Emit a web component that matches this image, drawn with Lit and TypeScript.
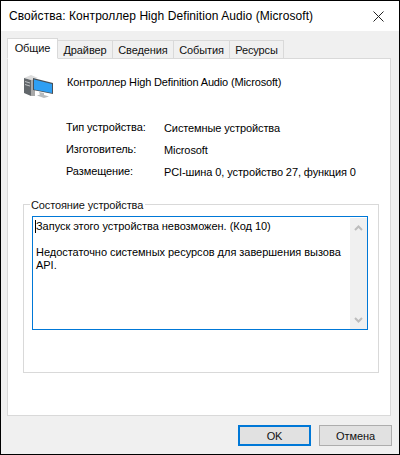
import { LitElement, html, css } from "lit";
import { customElement } from "lit/decorators.js";
import { styleMap } from "lit/directives/style-map.js";

@customElement("app-root")
export class AppRoot extends LitElement {
  static styles = css`
    :host { display: block; width: 400px; height: 455px; font-family: "Liberation Sans", Arial, sans-serif; font-size: 11px; letter-spacing: -0.1px; color: #000; }
    * { box-sizing: border-box; }
    .win { width: 400px; height: 455px; border: 1px solid #000; background: #f0f0f0; display: flex; flex-direction: column; }
    .title { height: 30px; flex: none; background: #fff; display: flex; align-items: center; justify-content: space-between; padding: 0 15px 0 8px; font-size: 12px; letter-spacing: 0.07px; }
    .close { width: 11px; height: 11px; display: block; }
    .body { flex: 1; padding: 7px 8px 0 6px; display: flex; flex-direction: column; min-height: 0; }
    .tabs { display: flex; height: 20px; flex: none; align-items: flex-end; position: relative; z-index: 1; }
    .tab { height: 18px; border: 1px solid #d9d9d9; border-left: none; border-bottom: none; display: flex; align-items: center; justify-content: center; background: #f0f0f0; color: #111; padding-top: 1px; }
    .tab.active { height: 21px; background: #fff; border: 1px solid #d9d9d9; border-bottom: 1px solid #fff; margin-bottom: -1px; padding: 0 0 2px; }
    .panel { flex: none; width: 384px; height: 358px; background: #fff; border: 1px solid #d9d9d9; padding: 0 15px; display: flex; flex-direction: column; }
    .head { display: flex; align-items: flex-start; height: 61px; padding: 16px 0 0 1px; gap: 14px; }
    .head svg { width: 29px; height: 24px; flex: none; }
    .head span { line-height: 14px; letter-spacing: -0.15px; }
    .props { display: grid; grid-template-columns: 98px 1fr; grid-auto-rows: 22px; margin-left: 43px; line-height: 14px; }
    .props .v { padding-top: 1px; }
    .group { position: relative; margin-top: 18px; width: 356px; height: 169px; border: 1px solid #d9d9d9; padding: 11px 8px; }
    .legend { position: absolute; top: -7px; left: 6px; background: #fff; padding: 0 2px 0 1px; line-height: 14px; color: #111; letter-spacing: -0.12px; }
    .box { width: 336px; height: 114px; border: 1px solid #0078d7; display: flex; background: #fff; }
    .text { flex: 1; padding: 3px 0 0 3px; line-height: 13px; position: relative; white-space: pre-line; letter-spacing: -0.03px; }
    .caret { position: absolute; left: 2px; top: 3px; width: 1px; height: 13px; background: #000; }
    .bar { width: 17px; flex: none; background: #f0f0f0; margin: 1px 0 0 0; display: flex; flex-direction: column; justify-content: space-between; align-items: center; padding: 7px 0 6px; }
    .bar svg { width: 9px; height: 6px; display: block; }
    .footer { flex: 1; display: flex; justify-content: flex-end; gap: 8px; padding-top: 9px; margin-right: -1px; }
    .btn { width: 73px; height: 21px; border: 1px solid #adadad; background: #e1e1e1; display: flex; align-items: center; justify-content: center; color: #111; }
    .btn.default { border: 2px solid #0078d7; }
  `;

  render() {
    const tabs = [
      { label: "Драйвер", width: 55 },
      { label: "Сведения", width: 61 },
      { label: "События", width: 56 },
      { label: "Ресурсы", width: 54 },
    ];
    return html`
      <div class="win">
        <div class="title">
          <span>Свойства: Контроллер High Definition Audio (Microsoft)</span>
          <svg class="close" viewBox="0 0 11 11"><path d="M.5 .5 10.500 10.500M10.500 .5 .5 10.500" stroke="#222" stroke-width="1" fill="none"/></svg>
        </div>
        <div class="body">
          <div class="tabs">
            <div class="tab active" style=${styleMap({ width: "51px" })}>Общие</div>
            ${tabs.map((t) => html`<div class="tab" style=${styleMap({ width: `${t.width}px` })}>${t.label}</div>`)}
          </div>
          <div class="panel">
            <div class="head">
              <svg viewBox="0 0 29 24">
                <path d="M0 3 7 0 14 3 7 5Z" fill="#dcdcdc"/>
                <path d="M0 3 7 5V21L0 18Z" fill="#62676b"/>
                <path d="M1 6 6 7.500V8.500L1 7ZM1 9 6 10.500V11.500L1 10Z" fill="#bfc2c4"/>
                <path d="M7 5 11 4V21L7 21Z" fill="#a8a8a8"/>
                <path d="M9 3 29 8V19L9 15Z" fill="#4a5056"/>
                <path d="M10 4.500 28 9V18L10 14.500Z" fill="#2f9ff3"/>
                <path d="M15 17 20 18V20L25 21.500 20 23 13 20.500 16 19.500Z" fill="#b9bcbe"/>
              </svg>
              <span>Контроллер High Definition Audio (Microsoft)</span>
            </div>
            <div class="props">
              <div>Тип устройства:</div><div class="v">Системные устройства</div>
              <div>Изготовитель:</div><div class="v">Microsoft</div>
              <div>Размещение:</div><div class="v">PCI-шина 0, устройство 27, функция 0</div>
            </div>
            <div class="group">
              <div class="legend">Состояние устройства</div>
              <div class="box">
                <div class="text"><i class="caret"></i>Запуск этого устройства невозможен. (Код 10)

Недостаточно системных ресурсов для завершения вызова
API.</div>
                <div class="bar">
                  <svg viewBox="0 0 9 6"><path d="M1 5 4.500 1.500 8 5" stroke="#bdbdbd" stroke-width="2" fill="none"/></svg>
                  <svg viewBox="0 0 9 6"><path d="M1 1 4.500 4.500 8 1" stroke="#bdbdbd" stroke-width="2" fill="none"/></svg>
                </div>
              </div>
            </div>
          </div>
          <div class="footer">
            <div class="btn default">OK</div>
            <div class="btn">Отмена</div>
          </div>
        </div>
      </div>
    `;
  }
}
